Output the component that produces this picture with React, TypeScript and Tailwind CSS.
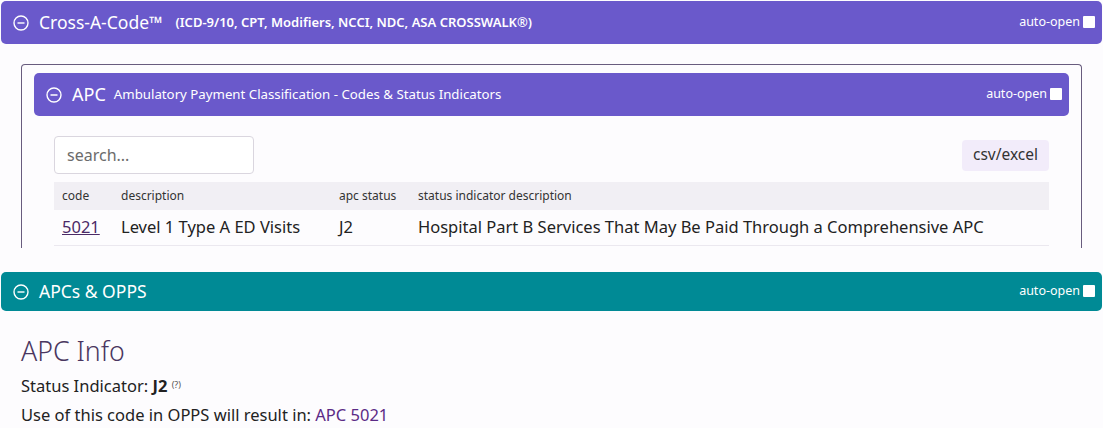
import { useState } from "react";

function CircleMinus({ className = "" }: { className?: string }) {
  return (
    <svg viewBox="0 0 16 16" className={className} fill="none" stroke="currentColor" strokeWidth="1.4">
      <circle cx="8" cy="8" r="7" />
      <path d="M4.5 8h7" />
    </svg>
  );
}

function AutoOpen() {
  const [on, setOn] = useState(false);
  return (
    <label className="flex items-center gap-[3px] text-[12.5px] text-white cursor-pointer">
      auto-open
      <input
        type="checkbox"
        checked={on}
        onChange={() => setOn(!on)}
        className="appearance-none w-[12px] h-[12px] bg-white rounded-[1px] mb-[1px]"
      />
    </label>
  );
}

export default function App() {
  const font = { fontFamily: '"Segoe UI", "Noto Sans", "Open Sans", sans-serif' };
  return (
    <div className="min-h-screen bg-[#fdfcfe] pt-[1px] text-[#222]" style={font}>
      {/* Cross-A-Code header */}
      <div className="mx-[1px] h-[43px] rounded-[5px] bg-[#6a59cb] flex items-center justify-between pl-[12px] pr-[7px] text-white">
        <div className="flex items-center">
          <CircleMinus className="w-[16px] h-[16px]" />
          <span className="ml-[10px] text-[17.5px]">Cross-A-Code™</span>
          <span className="ml-[13px] text-[13px] font-semibold">(ICD-9/10, CPT, Modifiers, NCCI, NDC, ASA CROSSWALK®)</span>
        </div>
        <AutoOpen />
      </div>

      {/* APC panel */}
      <div className="mx-[21px] mt-[20px] h-[184px] overflow-hidden border border-b-0 border-[#685c7e] rounded-t-[4px] px-[12px] pt-[8px]">
        <div className="h-[43px] rounded-[5px] bg-[#6a59cb] flex items-center justify-between pl-[12px] pr-[7px] text-white">
          <div className="flex items-center">
            <CircleMinus className="w-[16px] h-[16px]" />
            <span className="ml-[10px] text-[18px]">APC</span>
            <span className="ml-[8px] text-[13.25px]">Ambulatory Payment Classification - Codes &amp; Status Indicators</span>
          </div>
          <AutoOpen />
        </div>

        <div className="px-[20px] pt-[20px]">
          <div className="flex items-center justify-between">
            <input
              placeholder="search..."
              className="w-[200px] h-[38px] rounded-[4px] border border-[#dad6df] bg-white px-[12px] text-[16px] placeholder:text-[#6b6b6b] outline-none"
            />
            <button className="h-[31px] px-[11px] rounded-[4px] bg-[#f2ecfa] text-[15.5px] text-[#333]">csv/excel</button>
          </div>

          <table className="mt-[8px] w-full text-left border-collapse">
            <thead>
              <tr className="bg-[#f1eff4] h-[28px] text-[12px] text-[#333]">
                <th className="font-normal pl-[8px] w-[59px]">code</th>
                <th className="font-normal pl-[8px] w-[218px]">description</th>
                <th className="font-normal pl-[8px] w-[79px]">apc status</th>
                <th className="font-normal pl-[8px]">status indicator description</th>
              </tr>
            </thead>
            <tbody>
              <tr className="h-[35px] text-[16.5px] border-b border-[#ebe8ef]">
                <td className="pl-[8px]">
                  <a href="#" className="text-[#4b2a66] underline">5021</a>
                </td>
                <td className="pl-[8px]">Level 1 Type A ED Visits</td>
                <td className="pl-[8px]">J2</td>
                <td className="pl-[8px]">Hospital Part B Services That May Be Paid Through a Comprehensive APC</td>
              </tr>
            </tbody>
          </table>
        </div>
      </div>

      {/* APCs & OPPS */}
      <div className="mx-[1px] mt-[24px] h-[39px] rounded-[5px] bg-[#008a95] flex items-center justify-between pl-[12px] pr-[7px] text-white">
        <div className="flex items-center">
          <CircleMinus className="w-[16px] h-[16px]" />
          <span className="ml-[10px] text-[17.5px]">APCs &amp; OPPS</span>
        </div>
        <AutoOpen />
      </div>

      <div className="px-[21px] pt-[23px]">
        <h2 className="text-[26.7px] font-light text-[#4a3660] leading-[34px]">APC Info</h2>
        <div className="mt-[3px] text-[16.5px] leading-[29px] text-[#222]">
          <div>
            Status Indicator: <b>J2</b> <sup className="text-[9px] text-[#555]">(?)</sup>
          </div>
          <div>
            Use of this code in OPPS will result in: <a href="#" className="text-[#5b2a86]">APC 5021</a>
          </div>
        </div>
      </div>
    </div>
  );
}
